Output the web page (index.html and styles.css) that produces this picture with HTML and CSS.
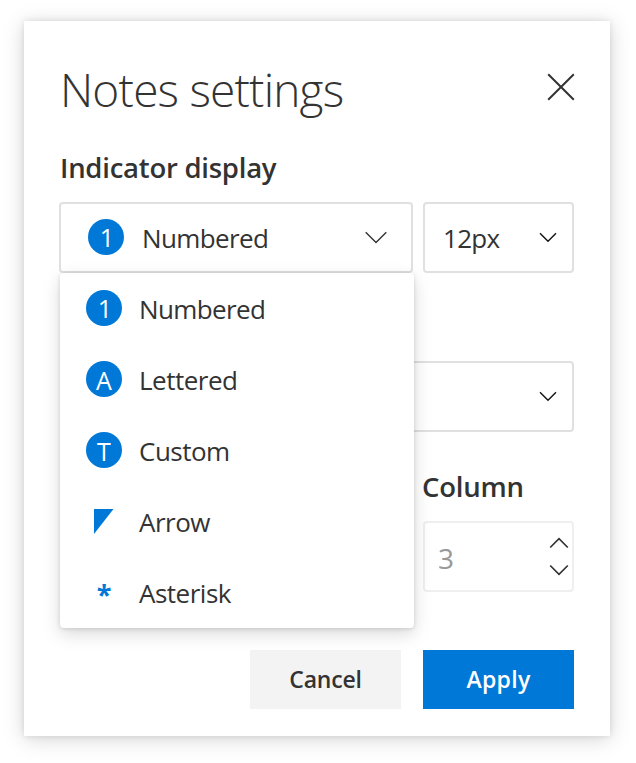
FILE: index.html
```
<!DOCTYPE html>
<html lang="en">
<head>
<meta charset="utf-8">
<title>Notes settings</title>
<link rel="stylesheet" href="styles.css">
</head>
<body>
<main class="dialog">
  <header class="header">
    <h1 class="title">Notes settings</h1>
    <svg class="close" width="28" height="28" viewBox="0 0 28 28"><path d="M1.2 1.2 26.8 26.8M26.8 1.2 1.2 26.8"/></svg>
  </header>

  <h2 class="label"><span class="label-indicator">Indicator display</span></h2>
  <div class="row">
    <div class="field field-type">
      <span class="badge digit">1</span>
      <span class="text t-numbered">Numbered</span>
      <svg class="chevron chevron-wide" width="22" height="13" viewBox="0 0 22 13"><path d="M.7 1.2 11 11.5 21.3 1.2"/></svg>
      <div class="menu">
        <div class="item"><span class="badge digit">1</span><span class="text t-numbered">Numbered</span></div>
        <div class="item"><span class="badge">A</span><span class="text t-lettered">Lettered</span></div>
        <div class="item"><span class="badge">T</span><span class="text t-custom">Custom</span></div>
        <div class="item"><span class="mark"><svg class="arrow" width="20" height="25" viewBox="0 0 20 25"><path d="M0 0H19.5L0 25Z"/></svg></span><span class="text t-arrow">Arrow</span></div>
        <div class="item"><span class="mark star">*</span><span class="text t-asterisk">Asterisk</span></div>
      </div>
    </div>
    <div class="field field-small">
      <span class="text t-size">12px</span>
      <svg class="chevron" width="18" height="11" viewBox="0 0 18 11"><path d="M1 1.2 9 9.2 17 1.2"/></svg>
    </div>
  </div>

  <div class="field field-full">
    <svg class="chevron" width="18" height="11" viewBox="0 0 18 11"><path d="M1 1.2 9 9.2 17 1.2"/></svg>
  </div>

  <div class="column">
    <h2 class="label"><span class="label-column">Column</span></h2>
    <div class="field field-number">
      <span class="text number">3</span>
      <span class="stepper">
        <svg class="step" width="20" height="12" viewBox="0 0 20 12"><path d="M1.2 10.5 10 1.7 18.8 10.5"/></svg>
        <svg class="step" width="20" height="12" viewBox="0 0 20 12"><path d="M1.2 1.5 10 10.3 18.8 1.5"/></svg>
      </span>
    </div>
  </div>

  <footer class="actions">
    <button class="button">Cancel</button>
    <button class="button primary">Apply</button>
  </footer>
</main>
</body>
</html>
```
FILE: styles.css
```
* { box-sizing: border-box; }
body {
  margin: 0;
  padding: 21px 26px 27px 24px;
  background: #fff;
  color: #333;
  font-family: "Open Sans", "Noto Sans", sans-serif;
}
.dialog {
  width: 586px;
  height: 715px;
  padding: 36px 36px 0;
  background: #fff;
  box-shadow: 0 3px 20px rgba(0, 0, 0, .17), 0 0 6px rgba(0, 0, 0, .1);
}
.header {
  display: flex;
  justify-content: space-between;
  height: 66px;
}
.title {
  margin: 0;
  font-size: 46px;
  font-weight: 340;
  line-height: 64px;
  letter-spacing: -.8px;
  white-space: nowrap;
}
.close { margin: 16px -1px 0 0; }
svg { flex: none; fill: none; stroke: #333; stroke-width: 2; }
.step { stroke-width: 1.7; }
.label {
  margin: 0;
  font-size: 27.5px;
  font-weight: 600;
  line-height: 40px;
  white-space: nowrap;
}
.label-indicator { letter-spacing: -.25px; }
.label-column { letter-spacing: -.2px; }
.header + .label { padding-top: 25px; }
.row { display: flex; gap: 10px; margin-top: 14px; }
.field {
  display: flex;
  align-items: center;
  height: 71px;
  border: 2px solid #e0e0e0;
  border-radius: 4px;
  background: #fff;
}
.field-type { position: relative; width: 354px; margin-left: -1px; padding-left: 27px; }
.field-small { width: 151px; padding-left: 18px; }
.field-full { width: 514px; margin-top: 88px; }
.field-number { width: 151px; padding-left: 13px; border-color: #efefef; margin-top: 14px; }
.text { font-size: 26px; line-height: 36px; padding-top: 1px; white-space: nowrap; }
.field > .badge + .text { margin-left: 18px; }
.chevron { margin-left: auto; margin-right: 15px; stroke: #111; stroke-width: 1.4; }
.chevron-wide { margin-right: 24px; stroke: #333; stroke-width: 1.4; }
.badge, .mark {
  display: flex;
  align-items: center;
  justify-content: center;
  flex: none;
  width: 36px;
  height: 36px;
}
.badge {
  margin-top: -1px;
  border-radius: 50%;
  background: #0078d7;
  color: #fff;
  font-size: 25px;
  line-height: 36px;
  padding-top: 2px;
}
.digit { padding: 0 0 0 2px; }
.menu {
  position: absolute;
  z-index: 1;
  top: 69px;
  left: -1px;
  width: 354px;
  height: 355px;
  border-radius: 4px;
  background: #fff;
  box-shadow: 0 6px 18px rgba(0, 0, 0, .15), 0 1px 4px rgba(0, 0, 0, .13);
}
.item { display: flex; align-items: center; gap: 17px; height: 71px; padding-left: 26px; }
.arrow { fill: #0078d7; stroke: none; margin-right: 1px; }
.star { color: #0078d7; font-size: 27px; font-weight: 700; line-height: 36px; padding-top: 3px; }
.t-numbered { letter-spacing: -.6px; }
.t-lettered, .t-custom, .t-arrow, .t-asterisk { letter-spacing: -.5px; }
.t-size { letter-spacing: -.7px; }
.number { color: #999; font-size: 28px; padding-top: 2px; }
.column { width: 151px; margin: 35px 0 0 362px; }
.field-number { margin-left: 1px; }
.stepper { display: flex; flex-direction: column; gap: 15px; margin-left: auto; margin-right: 3px; }
.actions { display: flex; gap: 22px; margin: 58px 0 0 190px; }
.button {
  width: 151px;
  height: 59px;
  padding: 0 0 2px;
  border: 0;
  background: #f3f3f3;
  color: #333;
  font: 600 23px "Open Sans", "Noto Sans", sans-serif;
  letter-spacing: -.2px;
}
.primary { background: #0078d7; color: #fff; letter-spacing: .3px; }
```
